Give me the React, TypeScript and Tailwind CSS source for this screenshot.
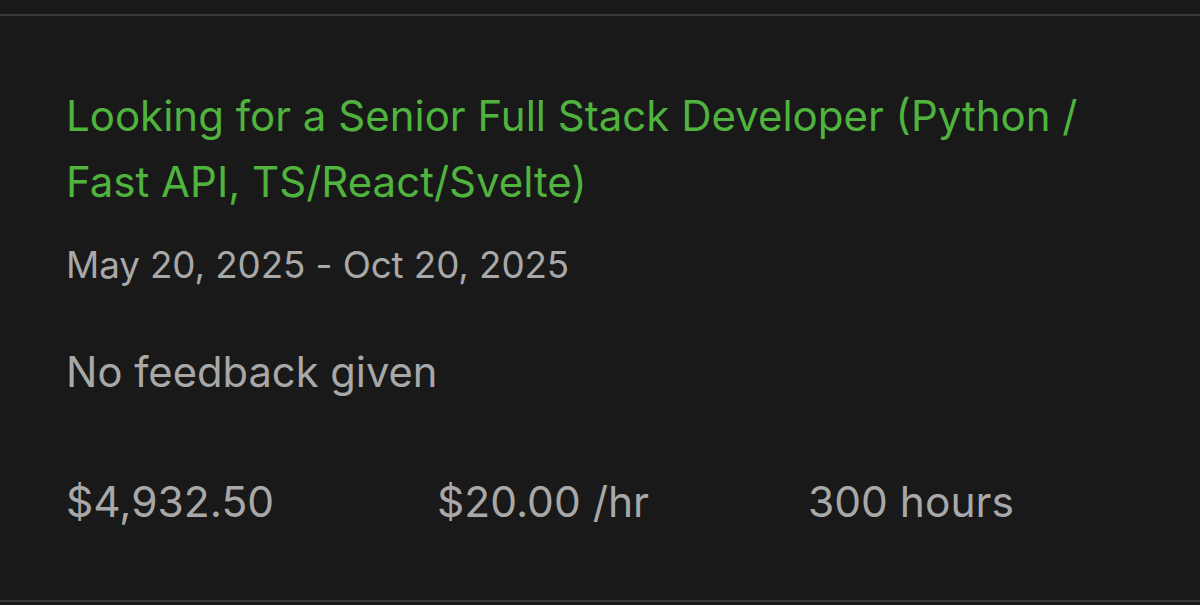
export default function App() {
  const font = { fontFamily: "Inter, 'Liberation Sans', sans-serif" };
  return (
    <div className="h-[605px] w-[1200px] overflow-hidden bg-[#191919]" style={font}>
      <div className="mt-[14px] h-[588px] border-y-2 border-[#383838] px-[66px] pt-[67px]">
        <h1 className="w-[1040px] text-[42px] leading-[66px] font-normal text-[#4fb33e]">
          Looking for a Senior Full Stack Developer (Python / Fast API, TS/React/Svelte)
        </h1>
        <p className="mt-[30px] text-[36.8px] leading-[40px] tracking-[-0.1px] text-[#a8a8a8]">
          May 20, 2025 - Oct 20, 2025
        </p>
        <p className="mt-[67px] text-[41.7px] leading-[40px] text-[#a8a8a8]">No feedback given</p>
        <div className="mt-[90px] flex text-[42.5px] leading-[40px] text-[#a8a8a8]">
          <span className="w-[371px]">$4,932.50</span>
          <span className="w-[371px]">$20.00 /hr</span>
          <span>300 hours</span>
        </div>
      </div>
    </div>
  );
}
